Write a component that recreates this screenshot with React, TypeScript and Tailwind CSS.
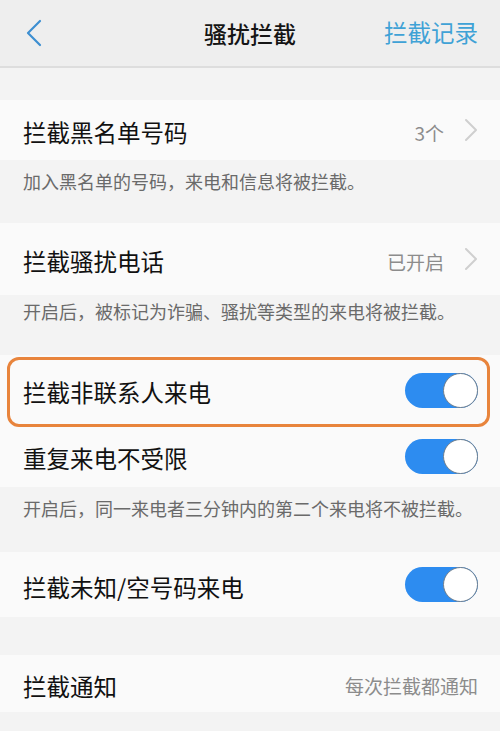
import React from "react";

const font = { fontFamily: '"Noto Sans CJK SC", "Noto Sans", sans-serif' };

function Toggle() {
  return (
    <div className="relative w-[73px] h-[35px] rounded-full bg-[#2d8cf0] shrink-0">
      <div className="absolute right-0 top-0 w-[35px] h-[35px] rounded-full bg-white border-[1.5px] border-[#6f7f8f]" />
    </div>
  );
}

function Chevron() {
  return (
    <svg width="14" height="24" viewBox="0 0 14 24" fill="none" className="shrink-0">
      <polyline points="2,2 12,12 2,22" stroke="#cfcfcf" strokeWidth="2" strokeLinecap="round" strokeLinejoin="round" />
    </svg>
  );
}

function Row({ title, value, chevron, toggle, h }: { title: string; value?: string; chevron?: boolean; toggle?: boolean; h: string }) {
  return (
    <div className={`flex items-center justify-between pl-[23px] pr-[22px] bg-[#fafafa] ${h}`}>
      <span className="text-[23.5px] text-[#111111] leading-none translate-y-[3px]">{title}</span>
      <div className="flex items-center gap-[20px]">
        {value && <span className="text-[19px] text-[#8c8c8c] leading-none translate-y-[2px]">{value}</span>}
        {chevron && <Chevron />}
        {toggle && <Toggle />}
      </div>
    </div>
  );
}

function Desc({ text, h, pt }: { text: string; h: string; pt: string }) {
  return (
    <div className={`px-[23px] ${h} ${pt}`}>
      <p className="text-[18px] leading-[24px] text-[#6a6a6a] whitespace-nowrap">{text}</p>
    </div>
  );
}

export default function App() {
  return (
    <div style={font} className="w-[500px] h-[731px] overflow-hidden bg-[#f3f3f3]">
      <header className="h-[68px] bg-[#eeeeee] border-b-2 border-[#dddddd] flex items-center justify-between pl-[24px] pr-[22px] relative">
        <svg width="20" height="28" viewBox="0 0 20 28" fill="none">
          <polyline points="16,2 4,14 16,26" stroke="#3d8fd1" strokeWidth="2.2" strokeLinecap="round" strokeLinejoin="round" />
        </svg>
        <h1 className="absolute left-0 right-0 text-center text-[23px] font-medium text-[#151515] pointer-events-none">骚扰拦截</h1>
        <span className="text-[23.5px] text-[#3fa2d6]">拦截记录</span>
      </header>
      <div className="h-[32px]" />
      <Row title="拦截黑名单号码" value="3个" chevron h="h-[60px]" />
      <Desc text="加入黑名单的号码，来电和信息将被拦截。" h="h-[63px]" pt="pt-[9px]" />
      <Row title="拦截骚扰电话" value="已开启" chevron h="h-[72px]" />
      <Desc text="开启后，被标记为诈骗、骚扰等类型的来电将被拦截。" h="h-[60px]" pt="pt-[4px]" />
      <div className="relative">
        <Row title="拦截非联系人来电" toggle h="h-[70px]" />
        <div className="absolute left-[7px] right-[10px] top-[2px] h-[70px] rounded-[12px] border-[3px] border-[#e8843c] pointer-events-none" />
      </div>
      <Row title="重复来电不受限" toggle h="h-[62px]" />
      <Desc text="开启后，同一来电者三分钟内的第二个来电将不被拦截。" h="h-[65px]" pt="pt-[9px]" />
      <Row title="拦截未知/空号码来电" toggle h="h-[65px]" />
      <div className="h-[38px]" />
      <Row title="拦截通知" value="每次拦截都通知" h="h-[57px]" />
    </div>
  );
}
